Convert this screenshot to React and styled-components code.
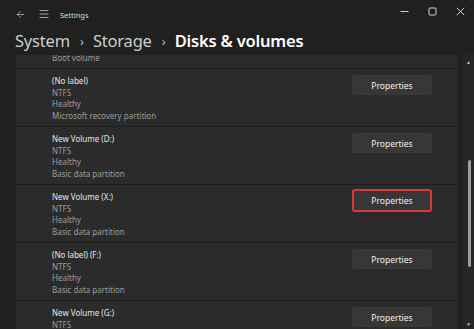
import React from "react";
import styled, { createGlobalStyle } from "styled-components";
import { ArrowLeft, Menu } from "lucide-react";

const GlobalStyle = createGlobalStyle`
  html, body {
    margin: 0;
    padding: 0;
    background: #202020;
  }
  body {
    font-family: "Noto Sans", sans-serif;
    color: #ffffff;
  }
`;

const volumes = [
  { lines: ["(No label)", "FAT32", "Healthy", "Boot volume"] },
  { lines: ["(No label)", "NTFS", "Healthy", "Microsoft recovery partition"] },
  { lines: ["New Volume (D:)", "NTFS", "Healthy", "Basic data partition"] },
  { lines: ["New Volume (X:)", "NTFS", "Healthy", "Basic data partition"], marked: true },
  { lines: ["(No label) (F:)", "NTFS", "Healthy", "Basic data partition"] },
  { lines: ["New Volume (G:)", "NTFS", "Healthy", "Basic data partition"] },
];

export default function App() {
  return (
    <>
      <GlobalStyle />
      <Window>
        <TitleBar>
          <IconBtn>
            <ArrowLeft size={11} strokeWidth={1.4} />
          </IconBtn>
          <IconBtn>
            <Menu size={12} strokeWidth={1.4} />
          </IconBtn>
          <AppName>Settings</AppName>
          <Controls>
            <Ctrl>
              <svg width="9" height="9" viewBox="0 0 9 9">
                <line x1="0.5" y1="4.5" x2="8.5" y2="4.5" stroke="#d0d0d0" strokeWidth="1" />
              </svg>
            </Ctrl>
            <Ctrl>
              <svg width="9" height="9" viewBox="0 0 9 9">
                <rect x="1" y="1" width="7" height="7" rx="1" fill="none" stroke="#d0d0d0" strokeWidth="1" />
              </svg>
            </Ctrl>
            <Ctrl>
              <svg width="9" height="9" viewBox="0 0 9 9">
                <path d="M0.8 0.8 L8.2 8.2 M8.2 0.8 L0.8 8.2" stroke="#d0d0d0" strokeWidth="1" />
              </svg>
            </Ctrl>
          </Controls>
        </TitleBar>

        <Crumbs>
          <Crumb>System</Crumb>
          <Chevron>›</Chevron>
          <Crumb>Storage</Crumb>
          <Chevron>›</Chevron>
          <Crumb current>Disks &amp; volumes</Crumb>
        </Crumbs>

        <Body>
          <ScrollArea>
            <List>
              {volumes.map((v, i) => (
                <Row key={i}>
                  <Info>
                    {v.lines.map((l, j) => (
                      <Line key={j} main={j === 0}>
                        {l}
                      </Line>
                    ))}
                  </Info>
                  <PropButton marked={v.marked}>Properties</PropButton>
                </Row>
              ))}
            </List>
          </ScrollArea>
          <ScrollTrack>
            <Arrow>▲</Arrow>
            <ThumbLane>
              <Thumb />
            </ThumbLane>
            <Arrow>▼</Arrow>
          </ScrollTrack>
        </Body>
      </Window>
    </>
  );
}

const Window = styled.div`
  width: 474px;
  height: 329px;
  display: flex;
  flex-direction: column;
  overflow: hidden;
  background: #202020;
`;

const TitleBar = styled.div`
  height: 28px;
  display: flex;
  align-items: center;
  padding-left: 8px;
  color: #cfcfcf;
`;

const IconBtn = styled.div`
  width: 24px;
  height: 20px;
  display: flex;
  align-items: center;
  justify-content: center;
  color: #d6d6d6;
`;

const AppName = styled.span`
  font-size: 7.5px;
  line-height: 12px;
  color: #dcdcdc;
  margin-left: 4px;
  margin-top: 1px;
`;

const Controls = styled.div`
  margin-left: auto;
  display: flex;
  align-self: flex-start;
  margin-top: 6px;
`;

const Ctrl = styled.div`
  width: 28px;
  height: 10px;
  display: flex;
  align-items: center;
  justify-content: center;
`;

const Crumbs = styled.div`
  display: flex;
  align-items: center;
  padding-left: 15px;
  height: 26px;
  font-size: 16.5px;
  line-height: 26px;
`;

const Crumb = styled.span`
  color: ${(p) => (p.current ? "#ffffff" : "#cdcdcd")};
  font-weight: ${(p) => (p.current ? 600 : 400)};
  letter-spacing: -0.2px;
`;

const Chevron = styled.span`
  color: #bdbdbd;
  font-size: 13px;
  margin: 0 9px 0 10px;
`;

const Body = styled.div`
  flex: 1;
  display: flex;
  min-height: 0;
  padding-top: 1px;
`;

const ScrollArea = styled.div`
  flex: 1;
  overflow: hidden;
  padding-left: 16px;
`;

const List = styled.div`
  margin-top: -44px;
  display: flex;
  flex-direction: column;
`;

const Row = styled.div`
  height: 58px;
  box-sizing: border-box;
  border-bottom: 1px solid #1d1d1d;
  background: #2b2b2b;
  display: flex;
  justify-content: space-between;
  align-items: flex-start;
  padding: 6px 26px 0 36px;
`;

const Info = styled.div`
  display: flex;
  flex-direction: column;
`;

const Line = styled.span`
  font-size: 8px;
  line-height: 11.5px;
  color: ${(p) => (p.main ? "#e6e6e6" : "#9c9c9c")};
`;

const PropButton = styled.button`
  width: 80px;
  height: ${(p) => (p.marked ? "23px" : "20px")};
  margin-top: ${(p) => (p.marked ? "-2px" : "0")};
  border-radius: 3px;
  border: ${(p) => (p.marked ? "2px solid #d83b3b" : "1px solid #3a3a3a")};
  background: #373737;
  color: #f0f0f0;
  font-family: "Noto Sans", sans-serif;
  font-size: 8.5px;
  padding: 0;
  box-sizing: border-box;
`;

const ScrollTrack = styled.div`
  width: 11px;
  margin-left: 5px;
  background: #262626;
  display: flex;
  flex-direction: column;
  align-items: center;
  padding: 4px 0 2px;
`;

const Arrow = styled.span`
  font-size: 5px;
  color: #bdbdbd;
  line-height: 6px;
`;

const ThumbLane = styled.div`
  flex: 1;
  width: 100%;
  display: flex;
  justify-content: flex-end;
  padding-right: 3px;
  padding-top: 95px;
  box-sizing: border-box;
`;

const Thumb = styled.div`
  width: 3px;
  height: 107px;
  border-radius: 2px;
  background: #9e9e9e;
`;
